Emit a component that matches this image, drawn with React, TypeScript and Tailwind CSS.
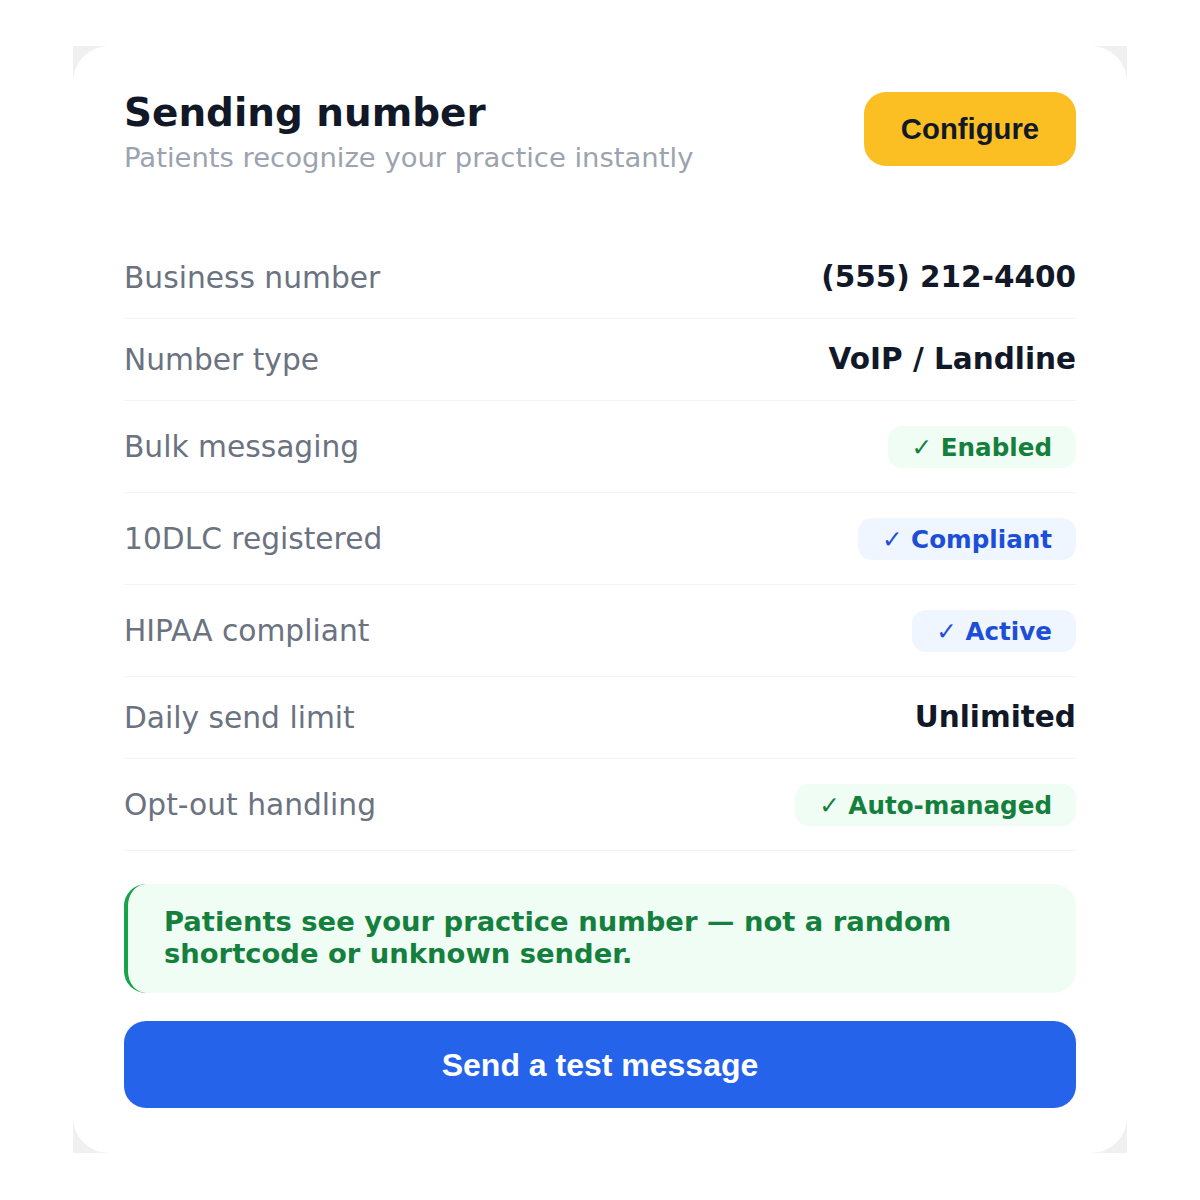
const rows: { label: string; value: string; kind: 'text' | 'green' | 'blue' }[] = [
  { label: 'Business number', value: '(555) 212-4400', kind: 'text' },
  { label: 'Number type', value: 'VoIP / Landline', kind: 'text' },
  { label: 'Bulk messaging', value: '✓ Enabled', kind: 'green' },
  { label: '10DLC registered', value: '✓ Compliant', kind: 'blue' },
  { label: 'HIPAA compliant', value: '✓ Active', kind: 'blue' },
  { label: 'Daily send limit', value: 'Unlimited', kind: 'text' },
  { label: 'Opt-out handling', value: '✓ Auto-managed', kind: 'green' },
];

function Badge({ value, kind }: { value: string; kind: 'green' | 'blue' }) {
  const color =
    kind === 'green' ? 'bg-[#f0fdf4] text-[#15803d]' : 'bg-[#eff6ff] text-[#1d4ed8]';
  return (
    <span className={`h-[42px] flex items-center pt-[3px] px-6 rounded-[14px] text-[24.6px] font-bold ${color}`}>
      {value}
    </span>
  );
}

export default function App() {
  return (
    <div className="min-h-screen bg-white pt-[46px] font-['DejaVu_Sans',sans-serif]">
      <div className="mx-auto w-[1054px] bg-[#f0f0f0]">
        <div className="bg-white rounded-[36px] px-[51px] pt-[44px] pb-[45px]">
          <div className="flex justify-between items-start">
            <div>
              <h1 className="text-[38.9px] leading-[46px] font-bold text-[#111827]">Sending number</h1>
              <p className="mt-[3px] text-[27.45px] leading-[38px] text-[#9ca3af]">
                Patients recognize your practice instantly
              </p>
            </div>
            <button className="mt-[2px] w-[212px] h-[74px] rounded-[22px] bg-[#fbbf24] text-[29.3px] font-bold text-[#111827] font-['Liberation_Sans',Arial,sans-serif]">
              Configure
            </button>
          </div>

          <div className="mt-[60px]">
            {rows.map((r) => (
              <div
                key={r.label}
                className={`flex justify-between items-center border-b border-[#f3f4f6] ${
                  r.kind === 'text' ? 'py-[18px]' : 'py-[23px]'
                }`}
              >
                <span className="text-[29.7px] leading-[45px] text-[#6b7280]">{r.label}</span>
                {r.kind === 'text' ? (
                  <span className="text-[29.5px] leading-[45px] font-bold text-[#111827]">{r.value}</span>
                ) : (
                  <Badge value={r.value} kind={r.kind} />
                )}
              </div>
            ))}
          </div>

          <div className="mt-[33px] rounded-[22px] border-l-4 border-[#16a34a] bg-[#f0fdf4] pl-9 pr-9 pt-[22px] pb-[23px]">
            <p className="text-[27.4px] leading-[32px] font-bold text-[#15803d]">
              Patients see your practice number — not a random shortcode or unknown sender.
            </p>
          </div>

          <button className="mt-[28px] w-full h-[87px] rounded-[22px] bg-[#2563eb] text-white text-[32px] font-bold font-['Liberation_Sans',Arial,sans-serif]">
            Send a test message
          </button>
        </div>
      </div>
    </div>
  );
}
